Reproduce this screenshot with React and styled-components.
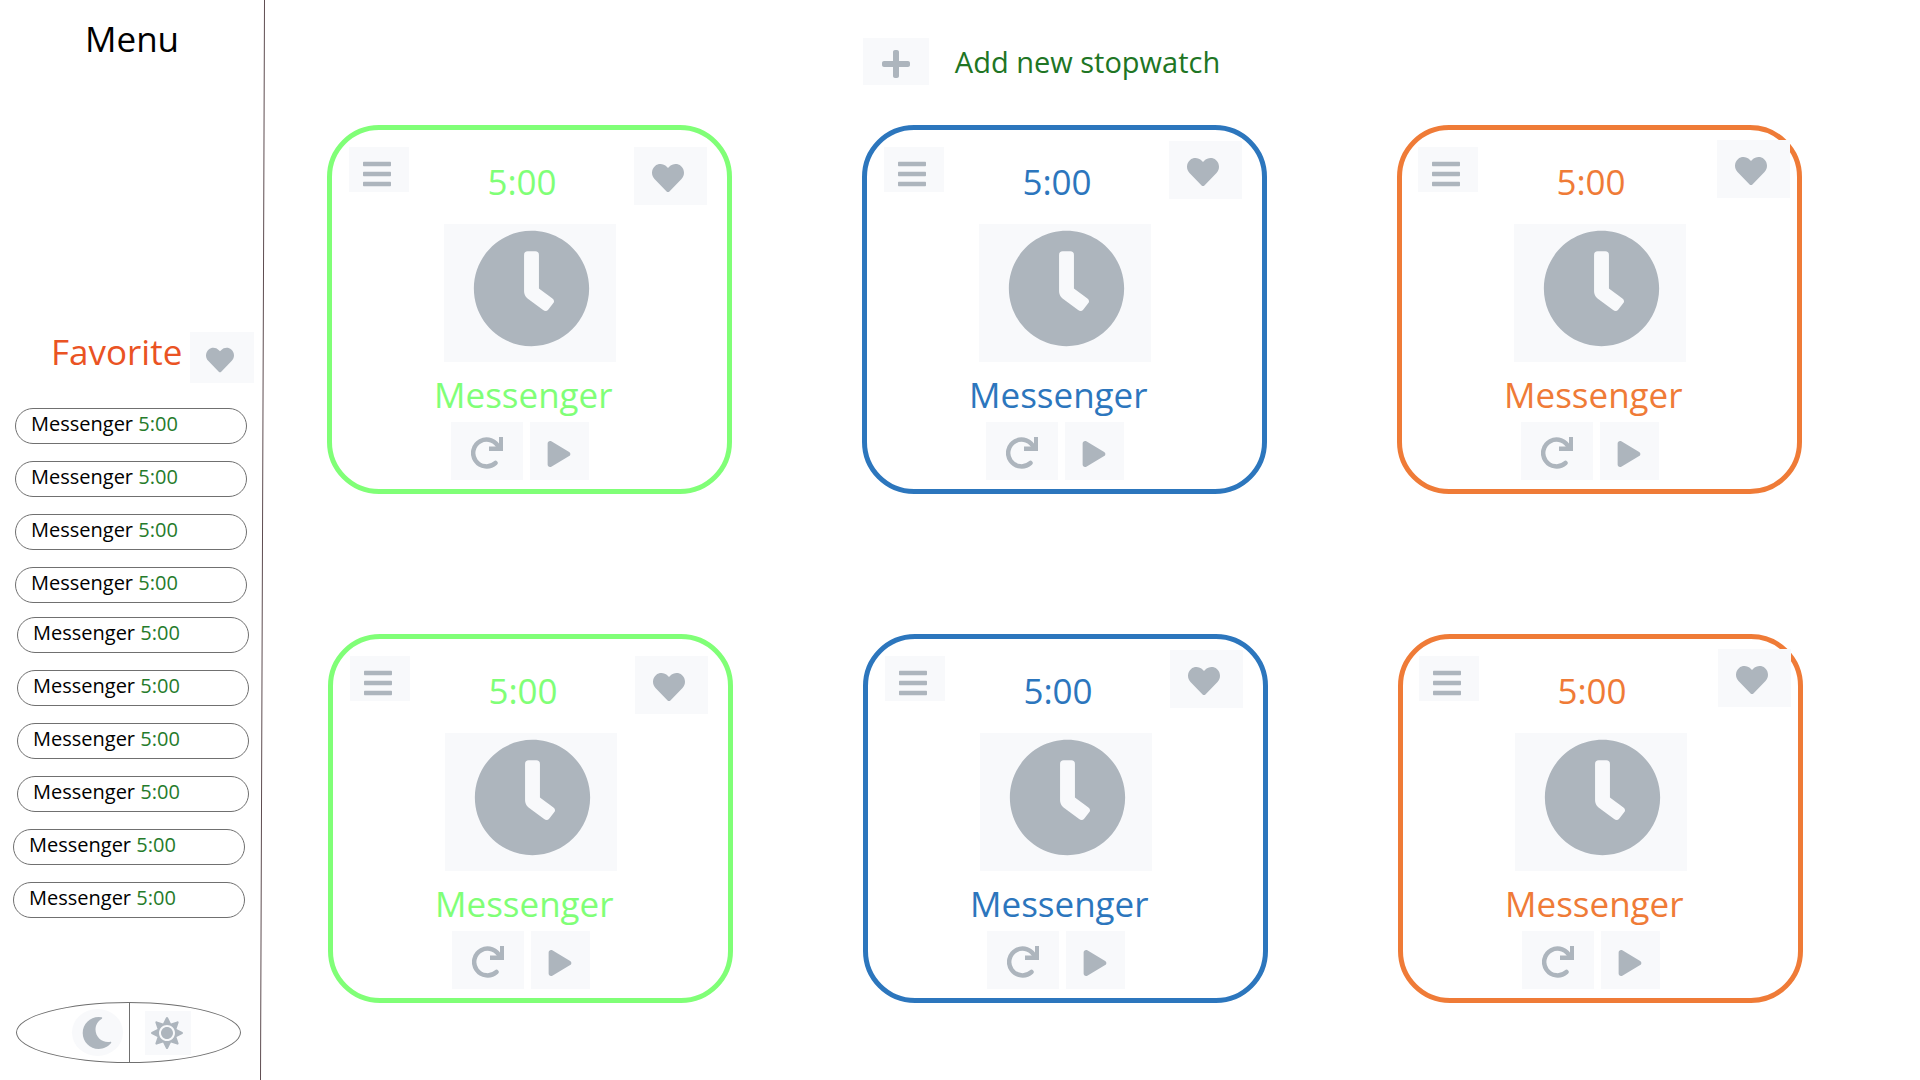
import React from "react";
import styled, { createGlobalStyle } from "styled-components";
import { FaBars, FaClock, FaHeart, FaMoon, FaPlay, FaPlus, FaSun } from "react-icons/fa";

const GlobalStyle = createGlobalStyle`
  *, *::before, *::after { box-sizing: border-box; }
  body { margin: 0; background: #fff; color: #000; font-family: "Open Sans", "Noto Sans", sans-serif; }
  h1, h2, ul, p { margin: 0; padding: 0; font-weight: 400; }
  ul { list-style: none; }
`;

const Page = styled.div`
  display: flex;
  min-height: 100vh;
`;

const Sidebar = styled.aside`
  flex: 0 0 260px;
  display: flex;
  flex-direction: column;
  padding: 11px 0;
`;

const Divider = styled.svg`
  flex: 0 0 5px;
  width: 5px;
  align-self: stretch;
`;

const MenuTitle = styled.h1`
  padding-left: 85px;
  font-size: 35px;
  line-height: 55px;
`;

const FavoriteHeader = styled.div`
  display: flex;
  align-items: flex-start;
  gap: 10px;
  margin-top: 258px;
  padding-left: 51px;
`;

const FavoriteTitle = styled.h2`
  flex: 0 0 129px;
  min-width: 0;
  color: #ea5323;
  font-size: 35px;
  line-height: 55px;
`;

const IconButton = styled.button`
  flex: none;
  display: flex;
  align-items: center;
  justify-content: center;
  width: ${(p) => p.$w}px;
  height: ${(p) => p.$h}px;
  margin-top: ${(p) => p.$top || 0}px;
  padding: ${(p) => p.$pad || "0"};
  border: 0;
  border-radius: ${(p) => (p.$round ? "50%" : "0")};
  background: #f8f9fb;
  color: #adb5bd;
  cursor: pointer;
  svg { display: block; flex: none; }
`;

const Favorites = styled.div`
  display: flex;
  flex-direction: column;
  margin-top: 25px;
`;

const FavoriteGroup = styled.ul`
  display: flex;
  flex-direction: column;
  gap: 17px;
  padding: ${(p) => p.$gap}px 0 0 ${(p) => p.$indent}px;
`;

const FavoriteItem = styled.li`
  width: 232px;
  height: 36px;
  padding-left: 15px;
  border: 1px solid #707070;
  border-radius: 18px;
  font-size: 20px;
  line-height: 30px;
`;

const ItemTime = styled.span`
  color: #257b2b;
`;

const ThemeSwitch = styled.div`
  display: grid;
  grid-template-columns: 1fr 1fr;
  width: 225px;
  height: 61px;
  margin: 84px 0 0 16px;
  border: 1px solid #707070;
  border-radius: 50%;
`;

const ThemeHalf = styled.div`
  min-width: 0;
  display: flex;
  align-items: center;
  justify-content: flex-end;
  padding-right: 6px;
  & + & {
    justify-content: flex-start;
    padding: 0 0 0 15px;
    border-left: 1px solid #707070;
  }
`;

const Main = styled.main`
  flex: 1;
  min-width: 0;
  padding: 38px 118px 76px 62px;
`;

const AddBar = styled.div`
  display: flex;
  justify-content: center;
  gap: 26px;
  margin-bottom: 40px;
  padding-right: 46px;
`;

const AddLabel = styled.label`
  color: #207524;
  font-size: 29px;
  line-height: 47px;
  cursor: pointer;
`;

const CardRow = styled.section`
  display: flex;
  justify-content: space-between;
  padding-left: ${(p) => p.$shift}px;
  margin-right: -${(p) => p.$shift}px;
  & + & { margin-top: 140px; }
`;

const Card = styled.article`
  flex: 0 0 405px;
  height: 369px;
  border: 5px solid ${(p) => p.$color};
  border-radius: 52px;
  color: ${(p) => p.$color};
`;

const CardTop = styled.header`
  display: flex;
  align-items: flex-start;
  height: 94px;
  padding: ${(p) => (p.$corner ? "10px 7px 0 16px" : "10px 20px 0 17px")};
`;

const CardTime = styled.p`
  width: 70px;
  padding-top: 18px;
  margin: 0 auto 0 78px;
  font-size: 35px;
  line-height: 48px;
  text-align: center;
`;

const ClockPanel = styled.div`
  display: flex;
  justify-content: center;
  width: 172px;
  height: 138px;
  margin-left: 112px;
  padding: 5px 0 0 2px;
  background: #f8f9fb;
  color: #adb5bd;
`;

const CardName = styled.h2`
  margin-top: 5px;
  padding-left: 102px;
  font-size: 35px;
  line-height: 55px;
`;

const Controls = styled.footer`
  display: flex;
  gap: 7px;
  padding-left: 119px;
`;

function RedoIcon() {
  return (
    <svg width="32" height="32" viewBox="0 0 32 32" aria-hidden="true">
      <path
        d="M24.5 26A13.4 13.4 0 1 1 28 11"
        fill="none"
        stroke="currentColor"
        strokeWidth="4.5"
        strokeLinecap="round"
      />
      <path d="M28 0h4v14H18V9.500h10z" fill="currentColor" />
    </svg>
  );
}

function Stopwatch({ color, heart }) {
  const top = { normal: 7, raised: 1, corner: 0 }[heart];
  return (
    <Card $color={color}>
      <CardTop $corner={heart === "corner"}>
        <IconButton type="button" aria-label="Options" $w={60} $h={45} $top={7} $pad="9px 4px 0 0">
          <FaBars size={32} />
        </IconButton>
        <CardTime>5:00</CardTime>
        <IconButton type="button" aria-label="Add to favorites" $w={73} $h={58} $top={top} $pad="4px 5px 0 0">
          <FaHeart size={32} />
        </IconButton>
      </CardTop>
      <ClockPanel>
        <FaClock size={119} />
      </ClockPanel>
      <CardName>Messenger</CardName>
      <Controls>
        <IconButton type="button" aria-label="Restart" $w={72} $h={58} $pad="4px 0 0">
          <RedoIcon />
        </IconButton>
        <IconButton type="button" aria-label="Start" $w={59} $h={58} $pad="6px 1px 0 0">
          <FaPlay size={26} />
        </IconButton>
      </Controls>
    </Card>
  );
}

const groups = [
  { indent: 15, gap: 0, count: 4 },
  { indent: 17, gap: 14, count: 4 },
  { indent: 13, gap: 17, count: 2 },
];

const watches = [
  { color: "#80ff77", heart: "normal" },
  { color: "#2c76bd", heart: "raised" },
  { color: "#ef7b37", heart: "corner" },
];

export default function App() {
  return (
    <>
      <GlobalStyle />
      <Page>
        <Sidebar>
          <MenuTitle>Menu</MenuTitle>
          <FavoriteHeader>
            <FavoriteTitle>Favorite</FavoriteTitle>
            <IconButton type="button" aria-label="Favorites" $w={64} $h={51} $top={8} $pad="4px 4px 0 0">
              <FaHeart size={28} />
            </IconButton>
          </FavoriteHeader>
          <Favorites>
            {groups.map((g) => (
              <FavoriteGroup key={g.indent} $indent={g.indent} $gap={g.gap}>
                {Array.from({ length: g.count }, (_, i) => (
                  <FavoriteItem key={i}>
                    Messenger <ItemTime>5:00</ItemTime>
                  </FavoriteItem>
                ))}
              </FavoriteGroup>
            ))}
          </Favorites>
          <ThemeSwitch>
            <ThemeHalf>
              <IconButton type="button" aria-label="Dark theme" $w={51} $h={47} $round>
                <FaMoon size={32} />
              </IconButton>
            </ThemeHalf>
            <ThemeHalf>
              <IconButton type="button" aria-label="Light theme" $w={46} $h={44} $pad="0 2px 0 0">
                <FaSun size={32} />
              </IconButton>
            </ThemeHalf>
          </ThemeSwitch>
        </Sidebar>
        <Divider viewBox="0 0 5 1080" preserveAspectRatio="none" aria-hidden="true">
          <line x1="4.500" y1="0" x2="0.500" y2="1080" stroke="#5e4c50" />
        </Divider>
        <Main>
          <AddBar>
            <IconButton id="add" type="button" $w={66} $h={47} $pad="5px 0 0">
              <FaPlus size={32} />
            </IconButton>
            <AddLabel htmlFor="add">Add new stopwatch</AddLabel>
          </AddBar>
          {[0, 1].map((row) => (
            <CardRow key={row} $shift={row}>
              {watches.map((w) => (
                <Stopwatch key={w.color} {...w} />
              ))}
            </CardRow>
          ))}
        </Main>
      </Page>
    </>
  );
}
